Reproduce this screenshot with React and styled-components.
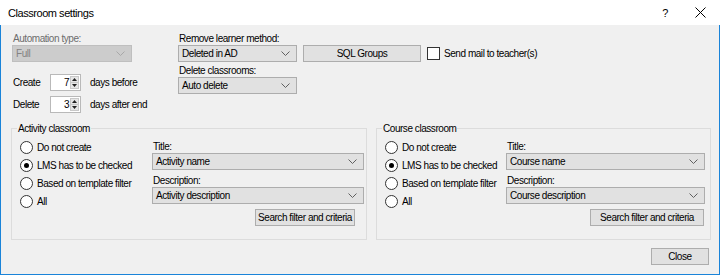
import React from 'react';
import styled, { createGlobalStyle } from 'styled-components';

const GlobalStyle = createGlobalStyle`
  html, body {
    margin: 0;
    padding: 0;
    background: #ffffff;
  }
  body {
    font-family: "Liberation Sans", Arial, sans-serif;
    font-size: 10px;
    letter-spacing: -0.45px;
    color: #000000;
  }
`;

const Window = styled.div`
  display: flex;
  flex-direction: column;
  width: 720px;
  height: 275px;
  box-sizing: border-box;
  overflow: hidden;
`;

const TitleBar = styled.div`
  display: flex;
  align-items: center;
  height: 25px;
  flex: none;
  background: #ffffff;
  padding-left: 8px;
  font-size: 11px;
  letter-spacing: -0.45px;
`;

const TitleText = styled.span`
  flex: 1;
`;

const CaptionButton = styled.div`
  display: flex;
  align-items: center;
  justify-content: center;
  width: ${props => props.$width}px;
  height: 25px;
  font-size: 11px;
`;

const Body = styled.div`
  flex: 1;
  display: flex;
  flex-direction: column;
  background: #f0f0f0;
  border: 1px solid #1a84d9;
  border-top: none;
  padding: 0 8px 0 10px;
`;

const TopArea = styled.div`
  display: flex;
  padding-top: 7px;
  gap: 46px;
  padding-left: 1px;
`;

const Column = styled.div`
  display: flex;
  flex-direction: column;
  flex: none;
  width: ${props => (props.$width ? `${props.$width}px` : 'auto')};
`;

const Label = styled.div`
  height: 13px;
  line-height: 13px;
  padding-left: 1px;
  margin-top: ${props => props.$top || 0}px;
  color: ${props => (props.$disabled ? '#6d6d6d' : '#000')};
  white-space: nowrap;
`;

const ComboBox = styled.div`
  display: flex;
  align-items: center;
  box-sizing: border-box;
  flex: none;
  width: ${props => (props.$width ? `${props.$width}px` : '100%')};
  height: 17px;
  padding: 0 6px 0 3px;
  background: ${props => (props.$disabled ? '#cccccc' : '#e1e1e1')};
  border: 1px solid ${props => (props.$disabled ? '#bfbfbf' : '#adadad')};
  color: ${props => (props.$disabled ? '#838383' : '#000')};
`;

const ComboText = styled.span`
  flex: 1;
  white-space: nowrap;
`;

const Chevron = ({ color }) => (
  <svg width="9" height="5" viewBox="0 0 9 5">
    <polyline points="0.5,0.5 4.5,4.5 8.5,0.5" fill="none" stroke={color} strokeWidth="1" />
  </svg>
);

const Combo = ({ children, width, disabled }) => (
  <ComboBox $width={width} $disabled={disabled}>
    <ComboText>{children}</ComboText>
    <Chevron color={disabled ? '#a8a8a8' : '#606060'} />
  </ComboBox>
);

const Row = styled.div`
  display: flex;
  align-items: center;
  white-space: nowrap;
  margin-top: ${props => props.$top || 0}px;
`;

const SpinLabel = styled.span`
  flex: none;
  width: 38px;
  padding-left: 1px;
  box-sizing: border-box;
`;

const SpinBox = styled.div`
  display: flex;
  align-items: stretch;
  flex: none;
  box-sizing: border-box;
  width: 31px;
  height: 17px;
  background: #ffffff;
  border: 1px solid #b9b9b9;
  margin-right: 9px;
`;

const SpinValue = styled.span`
  flex: 1;
  text-align: right;
  line-height: 15px;
  padding-right: 1px;
`;

const SpinArrows = styled.div`
  display: flex;
  flex-direction: column;
  width: 9px;
  margin: 1px 1px 1px 0;
`;

const SpinArrow = styled.div`
  flex: 1;
  display: flex;
  align-items: center;
  justify-content: center;
  background: #e6e6e6;
  border: 1px solid #c8c8c8;
  &:first-child {
    border-bottom: none;
  }
`;

const Triangle = ({ up }) => (
  <svg width="5" height="3" viewBox="0 0 5 3">
    <polygon points={up ? '2.5,0 5,3 0,3' : '0,0 5,0 2.5,3'} fill="#222" />
  </svg>
);

const Spinner = ({ label, value, after, top }) => (
  <Row $top={top}>
    <SpinLabel>{label}</SpinLabel>
    <SpinBox>
      <SpinValue>{value}</SpinValue>
      <SpinArrows>
        <SpinArrow><Triangle up /></SpinArrow>
        <SpinArrow><Triangle /></SpinArrow>
      </SpinArrows>
    </SpinBox>
    <span>{after}</span>
  </Row>
);

const Button = styled.div`
  display: flex;
  align-items: center;
  justify-content: center;
  flex: none;
  box-sizing: border-box;
  width: ${props => props.$width}px;
  height: 17px;
  white-space: nowrap;
  background: #e1e1e1;
  border: 1px solid #adadad;
  margin-top: ${props => props.$top || 0}px;
  margin-left: ${props => props.$left || 0}px;
  margin-right: ${props => props.$right || 0}px;
  align-self: ${props => (props.$end ? 'flex-end' : 'auto')};
`;

const CheckBox = styled.span`
  display: inline-block;
  flex: none;
  box-sizing: border-box;
  width: 13px;
  height: 13px;
  background: #ffffff;
  border: 1px solid #333333;
  margin-left: 6px;
  margin-right: 4px;
`;

const GroupsRow = styled.div`
  display: flex;
  gap: 9px;
  margin-top: 9px;
`;

const Group = styled.fieldset`
  box-sizing: border-box;
  flex: none;
  margin: 0;
  padding: 3px ${props => props.$padRight}px 8px 8px;
  width: ${props => props.$width}px;
  height: 118px;
  border: 1px solid #dcdcdc;
  display: grid;
  grid-template-columns: ${props => props.$radioWidth}px 1fr;
  min-width: 0;
`;

const Legend = styled.legend`
  padding: 0 1px;
  margin-left: -3px;
  line-height: 13px;
`;

const RadioList = styled.div`
  display: flex;
  flex-direction: column;
`;

const RadioRow = styled.div`
  display: flex;
  align-items: center;
  height: 18px;
  white-space: nowrap;
`;

const RadioCircle = styled.span`
  display: inline-flex;
  align-items: center;
  justify-content: center;
  flex: none;
  box-sizing: border-box;
  width: 13px;
  height: 13px;
  border-radius: 50%;
  border: 1px solid #333333;
  background: #ffffff;
  margin-right: 4px;

  &::after {
    content: '';
    display: ${props => (props.$checked ? 'block' : 'none')};
    width: 5px;
    height: 5px;
    border-radius: 50%;
    background: #000000;
  }
`;

const FormColumn = styled.div`
  display: flex;
  flex-direction: column;
  padding-top: 2px;
`;

const Footer = styled.div`
  display: flex;
  justify-content: flex-end;
  margin-top: 8px;
  padding-right: 2px;
`;

const radioOptions = ['Do not create', 'LMS has to be checked', 'Based on template filter', 'All'];

const ClassroomGroup = ({
  legend, title, description, width, radioWidth, padRight, buttonWidth, buttonRight,
}) => (
  <Group $width={width} $radioWidth={radioWidth} $padRight={padRight}>
    <Legend>{legend}</Legend>
    <RadioList>
      {radioOptions.map((option, i) => (
        <RadioRow key={option}>
          <RadioCircle $checked={i === 1} />
          {option}
        </RadioRow>
      ))}
    </RadioList>
    <FormColumn>
      <Label>Title:</Label>
      <Combo>{title}</Combo>
      <Label $top={4}>Description:</Label>
      <Combo>{description}</Combo>
      <Button $width={buttonWidth} $right={buttonRight} $top={5} $end>
        Search filter and criteria
      </Button>
    </FormColumn>
  </Group>
);

const CloseIcon = () => (
  <svg width="11" height="11" viewBox="0 0 11 11">
    <line x1="0.5" y1="0.5" x2="10.5" y2="10.5" stroke="#000" strokeWidth="1" />
    <line x1="10.5" y1="0.5" x2="0.5" y2="10.5" stroke="#000" strokeWidth="1" />
  </svg>
);

export default function App() {
  return (
    <>
      <GlobalStyle />
      <Window>
        <TitleBar>
          <TitleText>Classroom settings</TitleText>
          <CaptionButton $width={30}>?</CaptionButton>
          <CaptionButton $width={40}><CloseIcon /></CaptionButton>
        </TitleBar>
        <Body>
          <TopArea>
            <Column $width={120}>
              <Label $disabled>Automation type:</Label>
              <Combo disabled>Full</Combo>
              <Spinner label="Create" value="7" after="days before" top={12} />
              <Spinner label="Delete" value="3" after="days after end" top={5} />
            </Column>
            <Column>
              <Label>Remove learner method:</Label>
              <Row>
                <Combo width={119}>Deleted in AD</Combo>
                <Button $width={118} $left={6}>SQL Groups</Button>
                <CheckBox />
                <span>Send mail to teacher(s)</span>
              </Row>
              <Label $top={2}>Delete classrooms:</Label>
              <Combo width={119}>Auto delete</Combo>
            </Column>
          </TopArea>
          <GroupsRow>
            <ClassroomGroup
              legend="Activity classroom"
              title="Activity name"
              description="Activity description"
              width={356}
              radioWidth={132}
              padRight={2}
              buttonWidth={100}
              buttonRight={9}
            />
            <ClassroomGroup
              legend="Course classroom"
              title="Course name"
              description="Course description"
              width={335}
              radioWidth={121}
              padRight={5}
              buttonWidth={114}
              buttonRight={1}
            />
          </GroupsRow>
          <Footer>
            <Button $width={58}>Close</Button>
          </Footer>
        </Body>
      </Window>
    </>
  );
}
